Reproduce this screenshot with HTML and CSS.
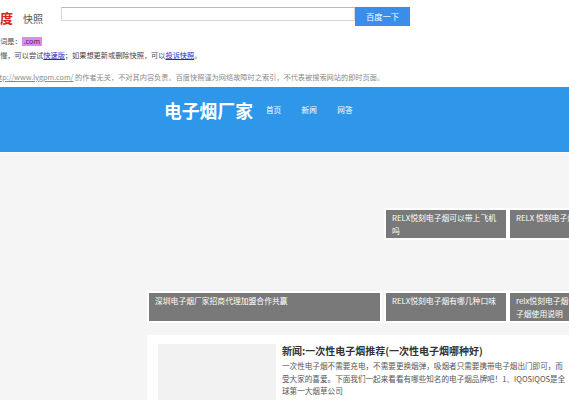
FILE: index.html
```html
<!DOCTYPE html>
<html lang="zh-CN">
<head>
<meta charset="utf-8">
<title>电子烟厂家 - 百度快照</title>
<link rel="stylesheet" href="styles.css">
</head>
<body>
<div class="bd-head">
  <div class="bd-top">
    <span class="bd-logo">百度</span>
    <span class="bd-kz">快照</span>
    <input class="bd-input" type="text">
    <button class="bd-btn" type="button">百度一下</button>
  </div>
  <div class="bd-line kw">您查询的关键词是：<span class="hl">.com</span></div>
  <div class="bd-line tip">如果打开速度慢，可以尝试<a href="#">快速版</a>；如果想更新或删除快照，可以<a href="#">投诉快照</a>。</div>
  <div class="bd-line note">百度和网页 <a href="#">http://www.lygpm.com/</a> 的作者无关，不对其内容负责。百度快照谨为网络故障时之索引，不代表被搜索网站的即时页面。</div>
</div>

<div class="site-bar">
  <div class="site-inner">
    <div class="site-logo">电子烟厂家</div>
    <nav class="site-nav">
      <a href="#">首页</a>
      <a href="#">新闻</a>
      <a href="#">网答</a>
    </nav>
  </div>
</div>

<div class="site-main">
  <div class="feature-grid">
    <div class="tile tile-big"><div class="cap">深圳电子烟厂家招商代理加盟合作共赢</div></div>
    <div class="tile"><div class="cap">RELX悦刻电子烟可以带上飞机吗</div></div>
    <div class="tile"><div class="cap">RELX 悦刻电子烟多少钱</div></div>
    <div class="tile"><div class="cap">RELX悦刻电子烟有哪几种口味</div></div>
    <div class="tile"><div class="cap">relx悦刻电子烟一代与二代的电子烟使用说明</div></div>
  </div>

  <div class="news-card">
    <div class="news-thumb"></div>
    <div class="news-body">
      <div class="news-title">新闻:一次性电子烟推荐(一次性电子烟哪种好)</div>
      <p class="news-desc">一次性电子烟不需要充电，不需要更换烟弹，吸烟者只需要携带电子烟出门即可，而受大家的喜爱。下面我们一起来看看有哪些知名的电子烟品牌吧！1、IQOSIQOS是全球第一大烟草公司</p>
    </div>
  </div>
</div>
</body>
</html>
```

FILE: styles.css
```css
html, body {
  margin: 0;
  padding: 0;
  width: 569px;
  height: 400px;
  overflow: hidden;
}

body {
  font-family: "Noto Sans CJK SC", "Liberation Sans", sans-serif;
  background: #f5f5f5;
  color: #333;
}

/* Baidu snapshot header */
.bd-head {
  background: #fff;
  height: 87px;
  padding-top: 7px;
  box-sizing: border-box;
  overflow: hidden;
}

.bd-top {
  display: flex;
  align-items: flex-start;
  height: 19px;
}

.bd-logo {
  margin-left: -13px;
  font-size: 13px;
  line-height: 22px;
  font-weight: bold;
  color: #d9231c;
  white-space: nowrap;
}

.bd-kz {
  margin-left: 10px;
  font-size: 10px;
  line-height: 23px;
  color: #555;
  white-space: nowrap;
}

.bd-input {
  margin: 0 0 0 18px;
  width: 294px;
  height: 14px;
  box-sizing: border-box;
  border: 1px solid #d6d6d6;
  border-top-color: #b9b9b9;
  padding: 0;
  background: #fff;
  outline: none;
}

.bd-btn {
  margin: 0;
  width: 55px;
  height: 19px;
  border: 0;
  padding: 0;
  background: #3a8de8;
  color: #fff;
  font-family: inherit;
  font-size: 8.3px;
  line-height: 19px;
}

.bd-line {
  font-size: 7.2px;
  line-height: 12px;
  white-space: nowrap;
  color: #444;
}

.bd-line a {
  color: #2a24c8;
  text-decoration: underline;
}

.kw {
  margin: 9px 0 0 -43px;
}

.hl {
  display: inline-block;
  background: #dc8af6;
  color: #333;
  padding: 0 2px;
  line-height: 9px;
}

.tip {
  margin: 2px 0 0 -43px;
}

.note {
  margin: 10px 0 0 -45px;
  color: #8a8a8a;
}

.note a {
  color: #8a8a8a;
}

/* Site top bar */
.site-bar {
  background: #2e97e9;
  height: 65px;
  border-bottom: 1px solid #fff;
}

.site-inner {
  display: flex;
  align-items: center;
  padding: 11px 0 0 164px;
  height: 24px;
}

.site-logo {
  font-size: 17.8px;
  line-height: 24px;
  font-weight: bold;
  color: #fff;
  white-space: nowrap;
}

.site-nav {
  display: flex;
  gap: 20.5px;
  margin-left: 13px;
}

.site-nav a {
  color: #fff;
  text-decoration: none;
  font-size: 7.6px;
  line-height: 12px;
  white-space: nowrap;
}

/* Main content */
.site-main {
  padding: 4px 0 0 147px;
}

.feature-grid {
  display: grid;
  grid-template-columns: 237px 124px 124px;
  grid-template-rows: 83px 83px;
  width: 485px;
}

.tile {
  display: flex;
  flex-direction: column;
  justify-content: flex-end;
  min-width: 0;
}

.tile-big {
  grid-row: 1 / 3;
  margin-right: 2px;
}

.cap {
  background: #797979;
  border: 2px solid #fff;
  color: #fff;
  font-size: 7.8px;
  line-height: 13px;
  min-height: 26px;
  padding: 1px 6px 1px;
}

.news-card {
  display: flex;
  gap: 6px;
  margin-top: 12px;
  width: 700px;
  height: 120px;
  background: #fff;
  padding: 9px 11px;
}

.news-thumb {
  flex: 0 0 118px;
  height: 80px;
  background: #f2f2f2;
}

.news-title {
  font-size: 10px;
  line-height: 14px;
  font-weight: bold;
  color: #333;
  white-space: nowrap;
}

.news-desc {
  margin: 2px 0 0;
  width: 286px;
  font-size: 7.6px;
  line-height: 12.5px;
  color: #555;
}
```
